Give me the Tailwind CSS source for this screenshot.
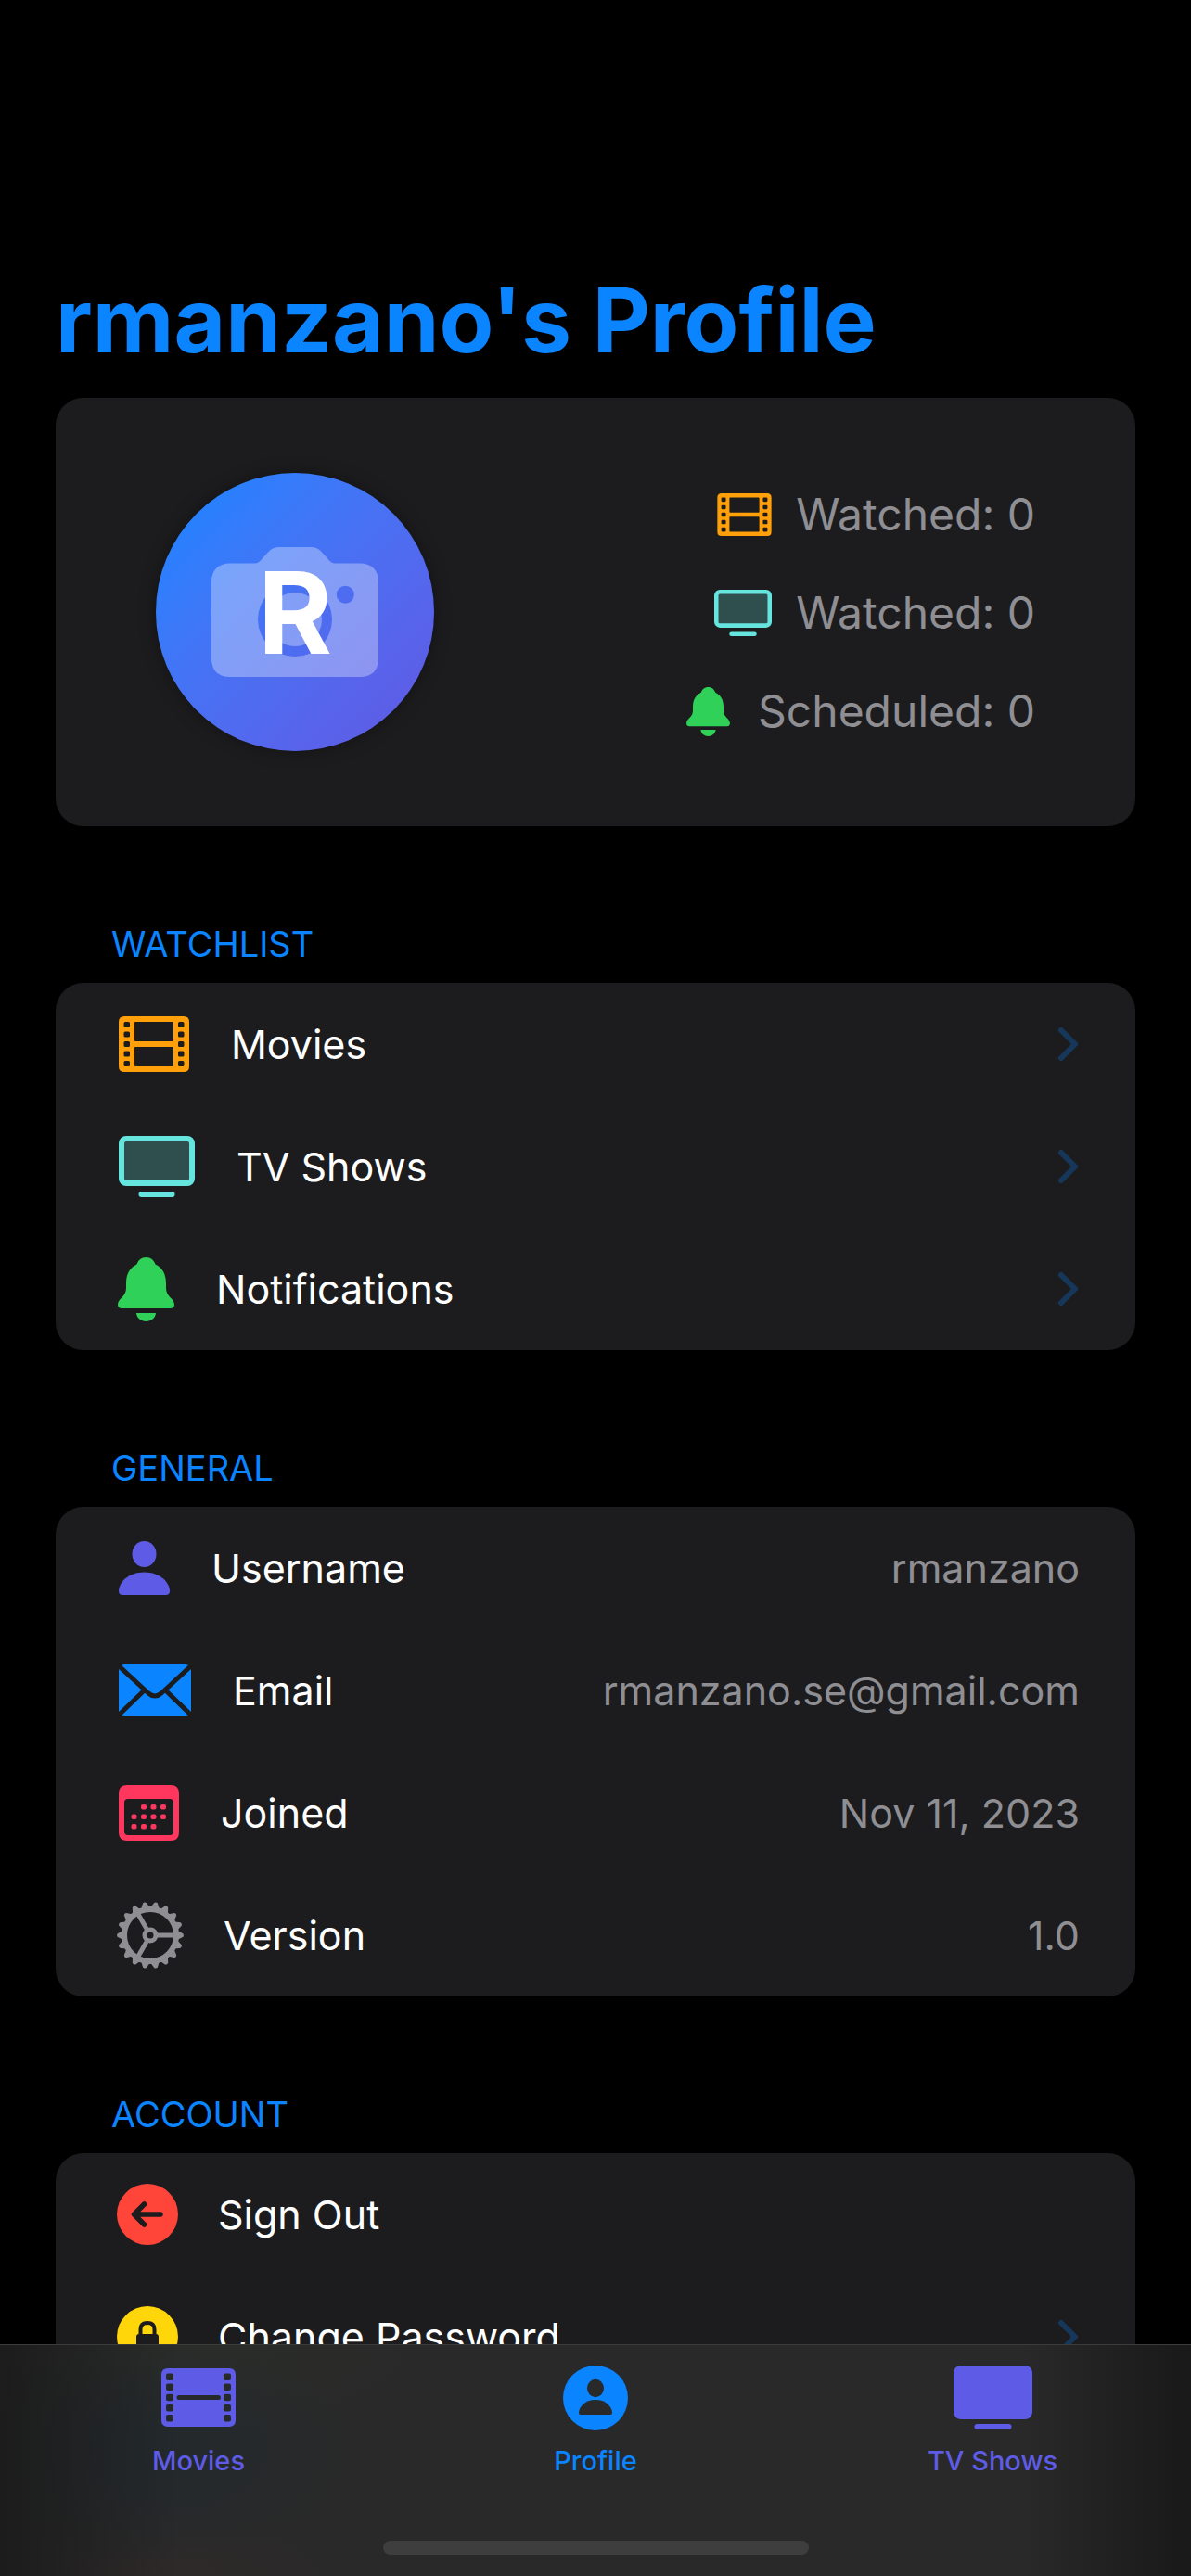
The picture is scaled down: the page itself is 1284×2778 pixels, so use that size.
<!DOCTYPE html>
<html lang="en">
<head>
<meta charset="utf-8">
<meta name="viewport" content="width=device-width, initial-scale=1">
<title>rmanzano's Profile</title>
<script src="https://cdn.jsdelivr.net/npm/@tailwindcss/browser@4"></script>
</head>
<body class="min-h-screen bg-black font-['Inter',sans-serif] text-white">

<!-- Shared icon shapes -->
<svg class="hidden" aria-hidden="true">
  <symbol id="film" viewBox="0 0 76 60">
    <path fill="currentColor" fill-rule="evenodd" d="M6 0H70Q76 0 76 6V54Q76 60 70 60H6Q0 60 0 54V6Q0 0 6 0Z
      M18 6Q17 6 17 7V26Q17 27 18 27H58Q59 27 59 26V7Q59 6 58 6Z
      M18 33Q17 33 17 34V53Q17 54 18 54H58Q59 54 59 53V34Q59 33 58 33Z
      M7 6H10.500Q12 6 12 7.500V10.500Q12 12 10.500 12H7Q5.500 12 5.500 10.500V7.500Q5.500 6 7 6Z
      M7 16.500H10.500Q12 16.500 12 18V21Q12 22.500 10.500 22.500H7Q5.500 22.500 5.500 21V18Q5.500 16.500 7 16.500Z
      M7 27H10.500Q12 27 12 28.500V31.500Q12 33 10.500 33H7Q5.500 33 5.500 31.500V28.500Q5.500 27 7 27Z
      M7 37.500H10.500Q12 37.500 12 39V42Q12 43.500 10.500 43.500H7Q5.500 43.500 5.500 42V39Q5.500 37.500 7 37.500Z
      M7 48H10.500Q12 48 12 49.500V52.500Q12 54 10.500 54H7Q5.500 54 5.500 52.500V49.500Q5.500 48 7 48Z
      M65.500 6H69Q70.500 6 70.500 7.500V10.500Q70.500 12 69 12H65.500Q64 12 64 10.500V7.500Q64 6 65.500 6Z
      M65.500 16.500H69Q70.500 16.500 70.500 18V21Q70.500 22.500 69 22.500H65.500Q64 22.500 64 21V18Q64 16.500 65.500 16.500Z
      M65.500 27H69Q70.500 27 70.500 28.500V31.500Q70.500 33 69 33H65.500Q64 33 64 31.500V28.500Q64 27 65.500 27Z
      M65.500 37.500H69Q70.500 37.500 70.500 39V42Q70.500 43.500 69 43.500H65.500Q64 43.500 64 42V39Q64 37.500 65.500 37.500Z
      M65.500 48H69Q70.500 48 70.500 49.500V52.500Q70.500 54 69 54H65.500Q64 54 64 52.500V49.500Q64 48 65.500 48Z"/>
  </symbol>
  <symbol id="tv" viewBox="0 0 82 66">
    <rect x="3" y="3" width="76" height="48" rx="5" fill="currentColor" fill-opacity=".25" stroke="currentColor" stroke-width="6"/>
    <rect x="21.500" y="60" width="39" height="6" rx="3" fill="currentColor"/>
  </symbol>
  <symbol id="bell" viewBox="0 0 61 69">
    <path fill="currentColor" d="M30.500 0C25.500 0 22 3 20.500 7.500C13 11 9 18 9 28V33C9 43 0 44 0 51C0 53.500 1.800 55 4 55H57C59.200 55 61 53.500 61 51C61 44 52 43 52 33V28C52 18 48 11 40.500 7.500C39 3 35.500 0 30.500 0ZM20 60H41C40.500 65.500 36 69 30.500 69S20.500 65.500 20 60Z"/>
  </symbol>
  <symbol id="chevron" viewBox="0 0 21 36">
    <path d="M3 3L18 18L3 33" fill="none" stroke="currentColor" stroke-width="6" stroke-linecap="round" stroke-linejoin="round"/>
  </symbol>
</svg>

<main class="px-[60px] pt-[284px]">
  <h1 class="pb-[23px] text-[96px] leading-[122px] font-bold text-[#0a84ff]">rmanzano's Profile</h1>

  <section class="flex items-center justify-between rounded-[30px] bg-[#1c1c1e] py-[81px] pr-[108px] pl-[108px]" aria-label="Summary">
    <button class="grid size-[300px] place-items-center rounded-full bg-linear-to-br from-[#1f82ff] from-10% to-[#5e5ce6] to-90% shadow-[0_0_18px_rgba(0,0,0,0.35)]" aria-label="Change profile picture">
      <svg class="col-start-1 row-start-1 h-[140px] w-[180px]" viewBox="0 0 180 140" fill="#fff" fill-opacity=".32" aria-hidden="true">
        <path fill-rule="evenodd" d="M20 17.500H46C50 17.500 52 16 55 12L62 4.500C65 1.500 68 0 73 0H107C112 0 115 1.500 118 4.500L125 12C128 16 130 17.500 134 17.500H160C173 17.500 180 25 180 38V120C180 133 173 140 160 140H20C7 140 0 133 0 120V38C0 25 7 17.500 20 17.500ZM90 38A40 40 0 1 0 90 118A40 40 0 1 0 90 38ZM144.300 41.800A9.500 9.500 0 1 0 144.300 60.800A9.500 9.500 0 1 0 144.300 41.800Z"/>
        <circle cx="90" cy="78" r="29"/>
      </svg>
      <span class="col-start-1 row-start-1 pt-[2px] text-[122px] leading-none font-bold">R</span>
    </button>
    <ul class="flex flex-col items-end gap-[42px] pt-[2px] text-[48px] leading-[64px] text-[#8e8e93]">
      <li class="flex items-center gap-[26px]"><svg class="h-[46px] w-[59px] text-[#ff9f0a]" aria-hidden="true"><use href="#film"/></svg>Watched: 0</li>
      <li class="flex items-center gap-[26px]"><svg class="h-[50px] w-[62px] text-[#66e4de]" aria-hidden="true"><use href="#tv"/></svg>Watched: 0</li>
      <li class="flex items-center gap-[30px]"><svg class="h-[53px] w-[47px] text-[#30d158]" aria-hidden="true"><use href="#bell"/></svg>Scheduled: 0</li>
    </ul>
  </section>

  <section>
    <h2 class="px-[60px] pt-[102px] pb-[17px] text-[38px] leading-[50px] text-[#0a84ff]">WATCHLIST</h2>
    <nav class="rounded-[30px] bg-[#1c1c1e] text-[43px]" aria-label="Watchlist">
      <a href="#movies" class="flex h-[132px] items-center gap-[45px] pr-[62px] pl-[68px]">
        <svg class="h-[60px] w-[76px] text-[#ff9f0a]" aria-hidden="true"><use href="#film"/></svg>
        <span class="grow">Movies</span>
        <svg class="h-[36px] w-[21px] text-[#163759]" aria-hidden="true"><use href="#chevron"/></svg>
      </a>
      <a href="#shows" class="flex h-[132px] items-center gap-[45px] pr-[62px] pl-[68px]">
        <svg class="h-[66px] w-[82px] text-[#66e4de]" aria-hidden="true"><use href="#tv"/></svg>
        <span class="grow">TV Shows</span>
        <svg class="h-[36px] w-[21px] text-[#163759]" aria-hidden="true"><use href="#chevron"/></svg>
      </a>
      <a href="#notifications" class="flex h-[132px] items-center gap-[45px] pr-[62px] pl-[67px]">
        <svg class="h-[69px] w-[61px] text-[#30d158]" aria-hidden="true"><use href="#bell"/></svg>
        <span class="grow">Notifications</span>
        <svg class="h-[36px] w-[21px] text-[#163759]" aria-hidden="true"><use href="#chevron"/></svg>
      </a>
    </nav>
  </section>

  <section>
    <h2 class="px-[60px] pt-[102px] pb-[17px] text-[38px] leading-[50px] text-[#0a84ff]">GENERAL</h2>
    <dl class="rounded-[30px] bg-[#1c1c1e] text-[43px]">
      <div class="flex h-[132px] items-center justify-between pr-[60px] pl-[68px]">
        <dt class="flex items-center gap-[45px]">
          <svg class="h-[58px] w-[55px]" viewBox="0 0 55 58" fill="#5e5ce6" aria-hidden="true"><ellipse cx="27.500" cy="14" rx="13" ry="14"/><path d="M4.500 58C1.500 58 0 56.500 0 54C0 45 10 33.600 27.500 33.600S55 45 55 54C55 56.500 53.500 58 50.500 58Z"/></svg>
          Username
        </dt>
        <dd class="text-[#8e8e93]">rmanzano</dd>
      </div>
      <div class="flex h-[132px] items-center justify-between pr-[60px] pl-[68px]">
        <dt class="flex items-center gap-[45px]">
          <svg class="h-[56px] w-[78px]" viewBox="0 0 78 56" aria-hidden="true"><rect width="78" height="56" rx="6" fill="#0a84ff"/><path d="M0 1.500L32 31Q39 37 46 31L78 1.500M0 54.500L27.500 28M78 54.500L50.500 28" fill="none" stroke="#1c1c1e" stroke-width="5"/></svg>
          Email
        </dt>
        <dd class="text-[#8e8e93]">rmanzano.se@gmail.com</dd>
      </div>
      <div class="flex h-[132px] items-center justify-between pr-[60px] pl-[68px]">
        <dt class="flex items-center gap-[45px]">
          <svg class="h-[60px] w-[65px]" viewBox="0 0 65 60" fill="#ff375f" aria-hidden="true">
            <path fill-rule="evenodd" d="M9 0H56Q65 0 65 9V51Q65 60 56 60H9Q0 60 0 51V9Q0 0 9 0ZM10 15Q6 15 6 19V50Q6 54 10 54H55Q59 54 59 50V19Q59 15 55 15Z"/>
            <g><rect x="24" y="21" width="6" height="5.500" rx="2"/><rect x="34.500" y="21" width="6" height="5.500" rx="2"/><rect x="45" y="21" width="6" height="5.500" rx="2"/><rect x="13.500" y="31.500" width="6" height="5.500" rx="2"/><rect x="24" y="31.500" width="6" height="5.500" rx="2"/><rect x="34.500" y="31.500" width="6" height="5.500" rx="2"/><rect x="45" y="31.500" width="6" height="5.500" rx="2"/><rect x="13.500" y="42" width="6" height="5.500" rx="2"/><rect x="24" y="42" width="6" height="5.500" rx="2"/><rect x="34.500" y="42" width="6" height="5.500" rx="2"/></g>
          </svg>
          Joined
        </dt>
        <dd class="text-[#8e8e93]">Nov 11, 2023</dd>
      </div>
      <div class="flex h-[132px] items-center justify-between pr-[60px] pl-[66px]">
        <dt class="flex items-center gap-[43px]">
          <svg class="size-[72px]" viewBox="-36 -36 72 72" fill="#8e8e93" aria-hidden="true">
            <circle r="28" fill="none" stroke="#8e8e93" stroke-width="6"/>
            <circle r="6" fill="none" stroke="#8e8e93" stroke-width="5"/>
            <path d="M8 0H27M-4 -7L-13.500 -23.400M-4 7L-13.500 23.400" stroke="#8e8e93" stroke-width="5"/>
            <g>
              <path id="teeth" d="M29 -5L34 -2.500Q36 -2 36 0Q36 2 34 2.500L29 5ZM-29 -5L-34 -2.500Q-36 -2 -36 0Q-36 2 -34 2.500L-29 5Z"/>
              <use href="#teeth" transform="rotate(20)"/><use href="#teeth" transform="rotate(40)"/><use href="#teeth" transform="rotate(60)"/><use href="#teeth" transform="rotate(80)"/>
              <use href="#teeth" transform="rotate(100)"/><use href="#teeth" transform="rotate(120)"/><use href="#teeth" transform="rotate(140)"/><use href="#teeth" transform="rotate(160)"/>
            </g>
          </svg>
          Version
        </dt>
        <dd class="text-[#8e8e93]">1.0</dd>
      </div>
    </dl>
  </section>

  <section>
    <h2 class="px-[60px] pt-[102px] pb-[17px] text-[38px] leading-[50px] text-[#0a84ff]">ACCOUNT</h2>
    <div class="rounded-[30px] bg-[#1c1c1e] text-[43px]">
      <button class="flex h-[132px] w-full items-center gap-[43px] pr-[62px] pl-[66px] text-left">
        <svg class="size-[66px]" viewBox="0 0 66 66" aria-hidden="true"><circle cx="33" cy="33" r="33" fill="#ff453a"/><path d="M29.500 22L18.500 33L29.500 44M19 33H47" fill="none" stroke="#1c1c1e" stroke-width="5.500" stroke-linecap="round" stroke-linejoin="round"/></svg>
        Sign Out
      </button>
      <a href="#password" class="flex h-[132px] items-center gap-[43px] pr-[62px] pl-[66px]">
        <svg class="size-[66px]" viewBox="0 0 66 66" aria-hidden="true"><circle cx="33" cy="33" r="33" fill="#ffd60a"/><rect x="21" y="30" width="24" height="20" rx="3" fill="#1c1c1e"/><path d="M25.500 31V25Q25.500 18 33 18T40.500 25V31" fill="none" stroke="#1c1c1e" stroke-width="4"/></svg>
        <span class="grow">Change Password</span>
        <svg class="h-[36px] w-[21px] text-[#163759]" aria-hidden="true"><use href="#chevron"/></svg>
      </a>
    </div>
  </section>
</main>

<nav class="fixed inset-x-0 bottom-0 flex h-[250px] flex-col items-center justify-between border-t border-[#3c3c3e] bg-[#292929] bg-[linear-gradient(90deg,#1c1c1c_0%,#1c1c1c00_15%,#19191900_86%,#191919_100%),radial-gradient(230px_130px_at_150px_110px,#22292d_0%,#22292d00_100%),radial-gradient(300px_100px_at_160px_0px,#2b2e29_0%,#2b2e2900_100%),radial-gradient(240px_80px_at_160px_250px,#2f2a2a_0%,#2f2a2a00_100%)] pb-[23px]" aria-label="Tabs">
  <div class="grid w-full grid-cols-3 text-center text-[29px] leading-[24px] font-medium text-[#5e5ce6]">
    <a href="#movies" class="flex flex-col items-center">
      <span class="flex h-[113px] items-center"><svg class="h-[63px] w-[80px]" viewBox="0 0 80 63" aria-hidden="true">
        <path fill="currentColor" fill-rule="evenodd" d="M7 0H73Q80 0 80 7V56Q80 63 73 63H7Q0 63 0 56V7Q0 0 7 0Z
          M7 5.500H11Q13 5.500 13 7.500V11Q13 13 11 13H7Q5 13 5 11V7.500Q5 5.500 7 5.500ZM7 16.500H11Q13 16.500 13 18.500V22Q13 24 11 24H7Q5 24 5 22V18.500Q5 16.500 7 16.500ZM7 27.700H11Q13 27.700 13 29.700V33.300Q13 35.300 11 35.300H7Q5 35.300 5 33.300V29.700Q5 27.700 7 27.700ZM7 39H11Q13 39 13 41V44.500Q13 46.500 11 46.500H7Q5 46.500 5 44.500V41Q5 39 7 39ZM7 50H11Q13 50 13 52V55.500Q13 57.500 11 57.500H7Q5 57.500 5 55.500V52Q5 50 7 50Z
          M69 5.500H73Q75 5.500 75 7.500V11Q75 13 73 13H69Q67 13 67 11V7.500Q67 5.500 69 5.500ZM69 16.500H73Q75 16.500 75 18.500V22Q75 24 73 24H69Q67 24 67 22V18.500Q67 16.500 69 16.500ZM69 27.700H73Q75 27.700 75 29.700V33.300Q75 35.300 73 35.300H69Q67 35.300 67 33.300V29.700Q67 27.700 69 27.700ZM69 39H73Q75 39 75 41V44.500Q75 46.500 73 46.500H69Q67 46.500 67 44.500V41Q67 39 69 39ZM69 50H73Q75 50 75 52V55.500Q75 57.500 73 57.500H69Q67 57.500 67 55.500V52Q67 50 69 50Z
          M19 29H61.500Q64 29 64 31.500T61.500 34H19Q16.500 34 16.500 31.500T19 29Z"/>
      </svg></span>
      Movies
    </a>
    <a href="#profile" class="flex flex-col items-center text-[#0a84ff]" aria-current="page">
      <span class="flex h-[113px] items-center"><svg class="size-[70px]" viewBox="0 0 70 70" aria-hidden="true"><circle cx="35" cy="35" r="35" fill="#0a84ff"/><g fill="#292929"><ellipse cx="35" cy="24.500" rx="9" ry="9.700"/><path d="M19 53Q17 53 17 51C17 45 23.500 37 35 37S53 45 53 51Q53 53 51 53Z"/></g></svg></span>
      Profile
    </a>
    <a href="#shows" class="flex flex-col items-center">
      <span class="flex h-[113px] items-center"><svg class="h-[69px] w-[85px]" viewBox="0 0 85 69" fill="currentColor" aria-hidden="true"><rect width="85" height="58" rx="8"/><rect x="22.500" y="63" width="40" height="6" rx="3"/></svg></span>
      TV Shows
    </a>
  </div>
  <div class="h-[15px] w-[459px] rounded-full bg-[#3e3e3e]"></div>
</nav>
</body>
</html>
